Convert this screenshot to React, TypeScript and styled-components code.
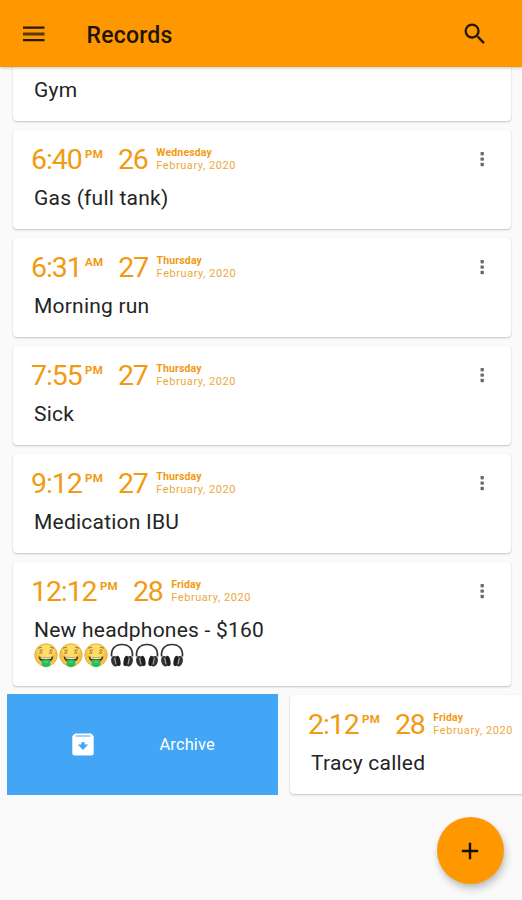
import React from "react";
import styled, { createGlobalStyle } from "styled-components";

const GlobalStyle = createGlobalStyle`
  * { box-sizing: border-box; }
  body { margin: 0; background: #fafafa; font-family: Roboto, sans-serif; }
`;

const Screen = styled.div`
  position: relative;
  width: 522px;
  height: 900px;
  overflow: hidden;
  background: #fafafa;
`;

const AppBar = styled.header`
  position: relative;
  z-index: 2;
  display: flex;
  align-items: center;
  height: 67px;
  padding: 0 33px 0 20px;
  background: #ff9800;
  box-shadow: 0 1px 3px rgba(0, 0, 0, 0.22);
`;

const Title = styled.h1`
  flex: 1;
  margin: 4px 0 0 38.5px;
  font-size: 23px;
  line-height: 28px;
  font-weight: 500;
  letter-spacing: 0.2px;
  color: #1c1407;
`;

const List = styled.main`
  display: flex;
  flex-direction: column;
  gap: 9px;
  margin-top: -45px;
  padding: 0 11px 0 13px;
`;

const Card = styled.article<{ $tall?: boolean }>`
  flex: none;
  height: ${(p) => (p.$tall ? 124 : 99)}px;
  padding: 14px 19px 0 18px;
  border-radius: 4px;
  background: #fff;
  box-shadow: 0 1px 2px rgba(0, 0, 0, 0.22), 0 0 1px rgba(0, 0, 0, 0.06);
`;

const Meta = styled.div`
  display: flex;
  height: 32px;
  color: #f29a12;
  white-space: nowrap;
`;

const BigNumber = styled.span`
  font-size: 28.5px;
  line-height: 32px;
  letter-spacing: -1.1px;
`;

const Meridiem = styled.span`
  margin: 4px 0 0 3.5px;
  font-size: 11.5px;
  line-height: 12px;
  font-weight: 700;
  letter-spacing: 0.2px;
`;

const Day = styled(BigNumber)`
  margin-left: 15px;
`;

const DateLines = styled.div`
  margin: 3px 0 0 8.5px;
  font-size: 11px;
  line-height: 12.5px;
`;

const Weekday = styled.div`
  font-weight: 700;
  font-size: 10.5px;
  letter-spacing: 0.15px;
`;

const MonthYear = styled.div`
  letter-spacing: 0.56px;
  color: #eba93c;
`;

const MoreButton = styled.button`
  display: flex;
  justify-content: center;
  width: 20px;
  height: 20px;
  margin: 5px 0 0 auto;
  padding: 0;
  border: 0;
  background: none;
`;

const Note = styled.p`
  margin: 8px 0 0 3px;
  font-size: 21px;
  line-height: 28px;
  letter-spacing: 0.22px;
  color: #242424;
  white-space: nowrap;
`;

const EmojiRow = styled.div`
  display: flex;
  gap: 1.2px;
  margin: -1px 0 0 3px;
`;

const SwipeRow = styled.div`
  display: flex;
  align-items: flex-start;
  width: 800px;
  margin: -1px 0 0 -6.5px;
`;

const ArchivePanel = styled.div`
  display: flex;
  align-items: center;
  width: 271px;
  height: 101px;
  margin-right: 12.5px;
  padding-left: 65px;
  background: #42a5f5;
  color: #fff;
`;

const ArchiveLabel = styled.span`
  margin: 1px 0 0 66px;
  font-size: 16.5px;
  line-height: 20px;
  letter-spacing: 0.1px;
`;

const SlidCard = styled(Card)`
  width: 499px;
  margin-top: 1px;
`;

const Fab = styled.button`
  position: absolute;
  right: 18.5px;
  bottom: 16px;
  z-index: 3;
  display: flex;
  align-items: center;
  justify-content: center;
  width: 67px;
  height: 67px;
  padding: 0;
  border: 0;
  border-radius: 50%;
  background: #ff9800;
  box-shadow: 2px 5px 8px rgba(0, 0, 0, 0.2), 0 2px 4px rgba(0, 0, 0, 0.08);
`;

const MenuIcon = () => (
  <svg width="28" height="22" viewBox="0 0 28 22" fill="#24190a">
    <path d="M3 3.5h21.5v2.3H3zM3 15.9h21.5v2.3H3z" />
    <path d="M3 9.5h21.5v3H3z" opacity=".75" />
  </svg>
);

const SearchIcon = () => (
  <svg width="28" height="28" viewBox="0 0 24 24" fill="#24190a">
    <path d="M15.5 14h-.79l-.28-.27A6.47 6.47 0 0 0 16 9.5 6.5 6.5 0 1 0 9.5 16c1.61 0 3.09-.59 4.23-1.57l.27.28v.79l5 4.99L20.49 19l-4.99-5zm-6 0a4.5 4.5 0 1 1 0-9 4.5 4.5 0 0 1 0 9z" />
  </svg>
);

const MoreIcon = () => (
  <svg width="6" height="20" viewBox="0 0 6 20" fill="#6b6b6b">
    <rect x="1.5" y="3" width="3.4" height="3.4" rx=".8" />
    <rect x="1.5" y="8.4" width="3.4" height="3.4" rx=".8" />
    <rect x="1.5" y="13.8" width="3.4" height="3.4" rx=".8" />
  </svg>
);

const ArchiveIcon = () => (
  <svg width="22" height="23" viewBox="0 0 22 23">
    <path d="M3 .5h16L21.7 3v17a2.5 2.5 0 0 1-2.5 2.5H2.8A2.5 2.5 0 0 1 .3 20V3z" fill="#fff" />
    <path d="M3.5 2.5h15v1.1h-15zM9.3 9.2h3.4v2.4h3.5L11 17l-5.2-5.4h3.5z" fill="#42a5f5" />
  </svg>
);

const PlusIcon = () => (
  <svg width="18" height="18" viewBox="0 0 18 18" stroke="#171006" strokeWidth="2.4">
    <path d="M9 .8v16.4M.8 9h16.4" />
  </svg>
);

const MoneyFace = () => (
  <svg width="24" height="25" viewBox="0 0 24 25">
    <circle cx="12" cy="12" r="11.3" fill="#f5c544" stroke="#dda334" strokeWidth=".7" />
    <ellipse cx="12" cy="8" rx="8.5" ry="6.5" fill="#ffdc68" />
    <g fill="none" stroke="#9b7429" strokeWidth="1" strokeLinecap="round">
      <path d="M4.4 5.2l3.2-1M19.6 5.2l-3.2-1M8.6 7.2c-3.4-1.2-3.4 1-1.6 1.6s1.4 2.2-1.6 1.2M18.6 7.2c-3.4-1.2-3.4 1-1.6 1.6s1.4 2.2-1.6 1.2" />
    </g>
    <path d="M4.6 13.5q7.4 2.2 14.8 0-.4 5.6-7.4 6-7-.4-7.4-6z" fill="#4d381a" />
    <path d="M6.5 14q5.5 1.1 11 0l-.4 1.7q-5.1.8-10.2 0z" fill="#f5e3b4" />
    <path d="M7.7 17q4.3-1.6 8.6 0v5.4q-4.3 3.5-8.6 0z" fill="#28bd57" />
    <path d="M10 19.2h4" stroke="#55d47a" strokeWidth="1.3" />
  </svg>
);

const Headphones = () => (
  <svg width="24" height="25" viewBox="0 0 24 25">
    <path d="M1.6 13.5C.8 5.8 5.2 1.5 12 1.5s11.2 4.3 10.4 12" fill="none" stroke="#333" strokeWidth="1.7" />
    <ellipse cx="4.8" cy="18.2" rx="3.6" ry="5.4" transform="rotate(-14 4.8 18.2)" fill="#333" />
    <ellipse cx="19.2" cy="18.2" rx="3.6" ry="5.4" transform="rotate(14 19.2 18.2)" fill="#333" />
    <ellipse cx="8" cy="18" rx="2.4" ry="5.2" transform="rotate(-12 8 18)" fill="#202020" />
    <ellipse cx="16" cy="18" rx="2.4" ry="5.2" transform="rotate(12 16 18)" fill="#202020" />
    <path d="M4.6 14.6l1.4 6.8M19.4 14.6l-1.4 6.8" stroke="#a5a5a5" strokeWidth="1.2" />
  </svg>
);

interface Entry {
  time: string;
  meridiem: string;
  day: string;
  weekday: string;
  note: string;
}

const RecordContent = ({ entry }: { entry: Entry }) => (
  <>
    <Meta>
      <BigNumber>{entry.time}</BigNumber>
      <Meridiem>{entry.meridiem}</Meridiem>
      <Day>{entry.day}</Day>
      <DateLines>
        <Weekday>{entry.weekday}</Weekday>
        <MonthYear>February, 2020</MonthYear>
      </DateLines>
      <MoreButton aria-label="More options">
        <MoreIcon />
      </MoreButton>
    </Meta>
    <Note>{entry.note}</Note>
  </>
);

const records: Entry[] = [
  { time: "6:40", meridiem: "PM", day: "26", weekday: "Wednesday", note: "Gas (full tank)" },
  { time: "6:31", meridiem: "AM", day: "27", weekday: "Thursday", note: "Morning run" },
  { time: "7:55", meridiem: "PM", day: "27", weekday: "Thursday", note: "Sick" },
  { time: "9:12", meridiem: "PM", day: "27", weekday: "Thursday", note: "Medication IBU" },
];

const headphones: Entry = { time: "12:12", meridiem: "PM", day: "28", weekday: "Friday", note: "New headphones - $160" };
const tracy: Entry = { time: "2:12", meridiem: "PM", day: "28", weekday: "Friday", note: "Tracy called" };

export default function App() {
  return (
    <Screen>
      <GlobalStyle />
      <AppBar>
        <MenuIcon />
        <Title>Records</Title>
        <SearchIcon />
      </AppBar>
      <List>
        <Card>
          <Meta />
          <Note>Gym</Note>
        </Card>
        {records.map((entry) => (
          <Card key={entry.note}>
            <RecordContent entry={entry} />
          </Card>
        ))}
        <Card $tall>
          <RecordContent entry={headphones} />
          <EmojiRow>
            <MoneyFace />
            <MoneyFace />
            <MoneyFace />
            <Headphones />
            <Headphones />
            <Headphones />
          </EmojiRow>
        </Card>
        <SwipeRow>
          <ArchivePanel>
            <ArchiveIcon />
            <ArchiveLabel>Archive</ArchiveLabel>
          </ArchivePanel>
          <SlidCard>
            <RecordContent entry={tracy} />
          </SlidCard>
        </SwipeRow>
      </List>
      <Fab aria-label="Add record">
        <PlusIcon />
      </Fab>
    </Screen>
  );
}
